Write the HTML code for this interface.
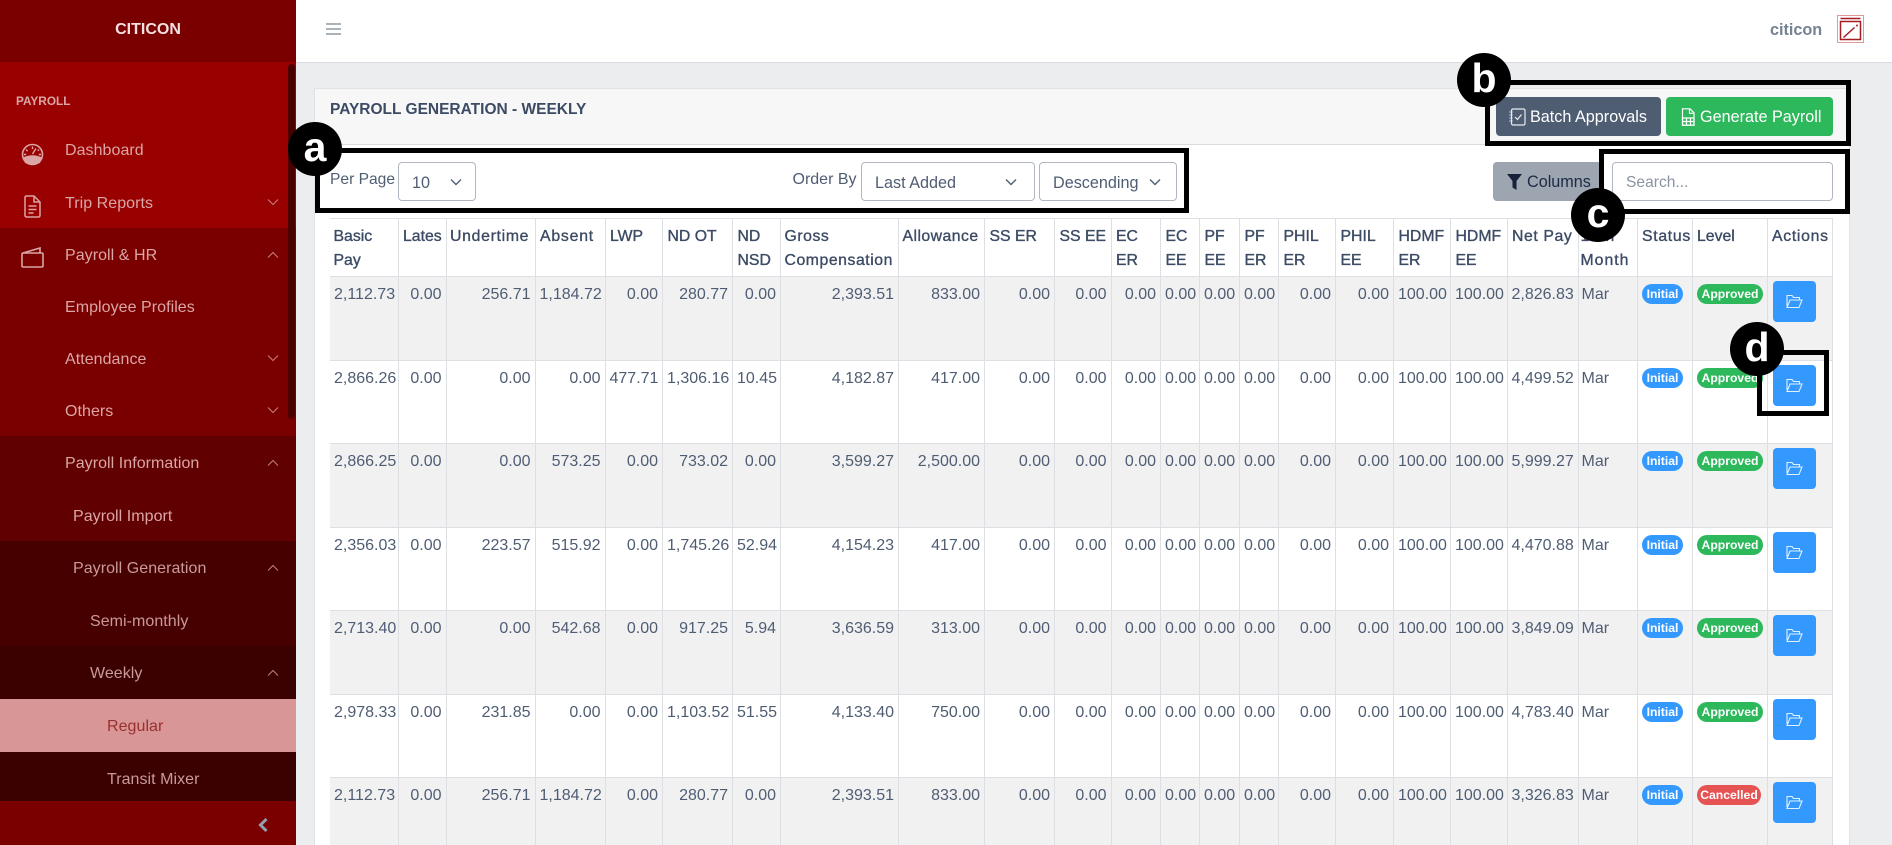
<!DOCTYPE html>
<html lang="en">
<head>
<meta charset="utf-8">
<title>Payroll Generation - Weekly</title>
<style>
*{box-sizing:border-box}
html,body{margin:0;padding:0;width:1892px;height:845px;overflow:hidden;background:#ebedef;font-family:"Liberation Sans",sans-serif;color:#4f5d73}
#page{position:relative;width:1892px;height:845px;overflow:hidden;background:#ebedef}
.abs{position:absolute}
#side{position:absolute;left:0;top:0;width:296px;height:845px;background:#7a0000;overflow:hidden}
.band{position:absolute;left:0;width:296px}
.nav{position:absolute;font-size:16px;line-height:20px;margin-top:1px;color:#dba6a6;white-space:nowrap;letter-spacing:.05px}
.dark{color:#c89a9a}
.chev{position:absolute;left:267px;width:12px;height:8px}
#top{position:absolute;left:296px;top:0;width:1596px;height:63px;background:#fff;border-bottom:1px solid #d8dbe0}
#card{position:absolute;left:314px;top:88px;width:1536px;height:757px;background:#fff;border:1px solid #dfe2e6;border-bottom:0}
#cardh{position:absolute;left:0;top:0;width:100%;height:56px;background:#f7f7f7;border-bottom:1px solid #d8dbe0}
.lbl{position:absolute;font-size:15.6px;line-height:20px;color:#4f5d73;white-space:nowrap}
.sel{position:absolute;top:162px;height:39px;background:#fff;border:1px solid #b1b7c1;border-radius:4px;font-size:16.2px;line-height:39px;color:#4f5d73;white-space:nowrap}
.sel svg{position:absolute;top:15px}
.btn{position:absolute;height:39px;border-radius:4px;color:#fff;font-size:16.2px;line-height:39px;white-space:nowrap}
.btn span{margin-top:1px}
table{position:absolute;left:330px;top:218px;width:1502px;border-collapse:collapse;table-layout:fixed}
th,td{border:1px solid #dcdfe4;vertical-align:top;padding:5px 4px 0;line-height:24px;overflow:visible}
th:first-child,td:first-child{border-left:0}
th{font-size:15.8px;font-weight:400;-webkit-text-stroke:.35px #3c4b64;color:#3c4b64;text-align:left;height:58px;padding:6px 3px 0 4.5px}
th:first-child{padding-left:3.5px}
td{font-size:16px;text-align:right;position:relative;color:#4f5d73;padding-top:6px;white-space:nowrap}
td.l{text-align:left;padding-left:3px}
tbody tr:nth-child(odd) td{background:#f1f1f2}
.b{position:absolute;left:4.5px;top:7px;height:20px;border-radius:10px;color:#fff;font-size:12.2px;font-weight:700;line-height:20px;text-align:center}
.i{width:41px;background:#39f}
.a{width:66px;background:#2eb85c}
.c{width:64px;background:#e55353}
.f{position:absolute;left:5px;top:4px;width:43px;height:41px;background:#39f;border-radius:4px}
.f svg{position:absolute;left:13px;top:13px}
.box{position:absolute;border:5px solid #000}
.dot{position:absolute;width:54px;height:54px;border-radius:50%;background:#000;color:#fff;font-family:"Liberation Sans",sans-serif;font-weight:700;font-size:41px;line-height:50px;text-align:center}
</style>
</head>
<body>
<div id="page">

<div id="side">
  <div class="band" style="top:62px;height:166px;background:#990000"></div>
  <div class="band" style="top:436px;height:105px;background:#610000"></div>
  <div class="band" style="top:541px;height:105px;background:#470000"></div>
  <div class="band" style="top:646px;height:53px;background:#3b0000"></div>
  <div class="band" style="top:699px;height:53px;background:#d89696"></div>
  <div class="band" style="top:752px;height:49px;background:#3b0000"></div>

  <div class="abs" style="left:0;top:20px;width:296px;text-align:center;font-size:16px;font-weight:700;line-height:20px;color:#f3e0e0">CITICON</div>
  <div class="abs" style="left:16px;top:92px;font-size:11.8px;font-weight:700;line-height:18px;color:#dba6a6">PAYROLL</div>

  <svg class="abs" style="left:21px;top:143px" width="23" height="23" viewBox="0 0 23 23" fill="none" stroke="#dba6a6" stroke-width="1.6"><circle cx="11.5" cy="11.5" r="10"/><path d="M2 14.5 Q11.5 10 21 14.5 L19 20 Q11.5 23.5 4 20Z" fill="#dba6a6" stroke="none"/><path d="M11.5 11 L15 5.5M11.5 3.5V6M5 6.5l1.6 1.6M18 6.5l-1.2 1.2M3 11.5h2.2M20 11.5h-2.2" stroke-width="1.4"/></svg>
  <svg class="abs" style="left:24px;top:195px" width="17" height="23" viewBox="0 0 17 23" fill="none" stroke="#dba6a6" stroke-width="1.5"><path d="M2.5 1h7.5l6 6v13.5a1.5 1.5 0 0 1-1.5 1.5h-12A1.5 1.5 0 0 1 1 20.5V2.5A1.5 1.5 0 0 1 2.5 1Z"/><path d="M10 1v6h6M4.5 11h8M4.5 14.5h8M4.5 18h5"/></svg>
  <svg class="abs" style="left:21px;top:247px" width="23" height="21" viewBox="0 0 23 21" fill="none" stroke="#dba6a6" stroke-width="1.6"><rect x="1" y="6" width="21" height="14" rx="1.2"/><path d="M2 6 L19 1 V6"/></svg>

  <div class="nav" style="left:65px;top:140px">Dashboard</div>
  <div class="nav" style="left:65px;top:193px">Trip Reports</div>
  <div class="nav" style="left:65px;top:245px">Payroll &amp; HR</div>
  <div class="nav" style="left:65px;top:297px">Employee Profiles</div>
  <div class="nav" style="left:65px;top:349px">Attendance</div>
  <div class="nav" style="left:65px;top:401px">Others</div>
  <div class="nav" style="left:65px;top:453px">Payroll Information</div>
  <div class="nav" style="left:73px;top:506px">Payroll Import</div>
  <div class="nav dark" style="left:73px;top:558px">Payroll Generation</div>
  <div class="nav dark" style="left:90px;top:611px">Semi-monthly</div>
  <div class="nav dark" style="left:90px;top:663px">Weekly</div>
  <div class="nav" style="left:107px;top:716px;color:#9c2f2f">Regular</div>
  <div class="nav dark" style="left:107px;top:769px">Transit Mixer</div>

  <svg class="chev" style="top:198px" viewBox="0 0 12 8" fill="none" stroke="#c98080" stroke-width="1"><path d="M1 1.5l5 5 5-5"/></svg>
  <svg class="chev" style="top:251px" viewBox="0 0 12 8" fill="none" stroke="#c98080" stroke-width="1"><path d="M1 6.5l5-5 5 5"/></svg>
  <svg class="chev" style="top:354px" viewBox="0 0 12 8" fill="none" stroke="#c98080" stroke-width="1"><path d="M1 1.5l5 5 5-5"/></svg>
  <svg class="chev" style="top:406px" viewBox="0 0 12 8" fill="none" stroke="#c98080" stroke-width="1"><path d="M1 1.5l5 5 5-5"/></svg>
  <svg class="chev" style="top:459px" viewBox="0 0 12 8" fill="none" stroke="#b98080" stroke-width="1"><path d="M1 6.5l5-5 5 5"/></svg>
  <svg class="chev" style="top:564px" viewBox="0 0 12 8" fill="none" stroke="#b98080" stroke-width="1"><path d="M1 6.5l5-5 5 5"/></svg>
  <svg class="chev" style="top:669px" viewBox="0 0 12 8" fill="none" stroke="#b98080" stroke-width="1"><path d="M1 6.5l5-5 5 5"/></svg>

  <svg class="abs" style="left:257px;top:817px" width="12" height="16" viewBox="0 0 12 16" fill="none" stroke="#8fa3b3" stroke-width="3"><path d="M9.5 2L3.5 8l6 6"/></svg>
  <div class="abs" style="left:288px;top:64px;width:7px;height:355px;border-radius:4px;background:#4b0000"></div>
</div>

<div id="top">
  <svg class="abs" style="left:30px;top:22px" width="15" height="14" viewBox="0 0 15 14" stroke="#7b8491" stroke-width="1.2"><path d="M0 2h15M0 7h15M0 12h15"/></svg>
  <div class="abs" style="left:1474px;top:20px;font-size:16.2px;font-weight:700;line-height:20px;color:#768192">citicon</div>
  <svg class="abs" style="left:1541px;top:15px" width="27" height="28" viewBox="0 0 27 28" fill="none"><rect x=".5" y=".5" width="26" height="27" fill="#fff" stroke="#dd9a9a"/><path d="M3.5 3.5h20M3.5 6.500h20v18h-20zM6.500 22.500l11-10" stroke="#a51c24" stroke-width="1.500"/><circle cx="20" cy="10.500" r="1" fill="#a51c24"/></svg>
</div>

<div id="card"><div id="cardh"></div></div>
<div class="abs" style="left:330px;top:100px;font-size:15.5px;font-weight:700;line-height:20px;color:#3c4b64;white-space:nowrap">PAYROLL GENERATION - WEEKLY</div>

<div class="btn" style="left:1496px;top:97px;width:165px;background:#4f5d73">
  <svg class="abs" style="left:13px;top:11px" width="17" height="18" viewBox="0 0 17 18" fill="none" stroke="#e8ebef" stroke-width="1.200"><rect x="2.500" y="1" width="13.500" height="16" rx="1.500"/><path d="M6 9l2.500 2.500L12.500 6.500"/><path d="M.5 4h3M.5 7h3M.5 10h3M.5 13h3" stroke-dasharray="1 1"/></svg>
  <span class="abs" style="left:34px;top:0">Batch Approvals</span>
</div>
<div class="btn" style="left:1666px;top:97px;width:167px;background:#2eb85c">
  <svg class="abs" style="left:15px;top:11px" width="14" height="18" viewBox="0 0 14 18" fill="none" stroke="#fff" stroke-width="1.200"><path d="M1.500.8h7.500l4 4v12.400h-11.500z"/><path d="M8.500.8v4.500h4.500"/><path d="M1.500 10h11.500v7.200H1.500zM1.500 13.500h11.500M5.500 10v7.200M9.500 10v7.200"/></svg>
  <span class="abs" style="left:34px;top:0">Generate Payroll</span>
</div>

<div class="lbl" style="left:330px;top:170px">Per Page</div>
<div class="sel" style="left:398px;width:78px"><span class="abs" style="left:13px;top:1px">10</span><svg style="left:51px" width="12" height="8" viewBox="0 0 12 8" fill="none" stroke="#4f5d73" stroke-width="1.400"><path d="M1 1.500l5 5 5-5"/></svg></div>
<div class="lbl" style="left:792.500px;top:170px;font-size:16px">Order By</div>
<div class="sel" style="left:861px;width:174px"><span class="abs" style="left:13px;top:1px">Last Added</span><svg style="left:143px" width="12" height="8" viewBox="0 0 12 8" fill="none" stroke="#4f5d73" stroke-width="1.400"><path d="M1 1.500l5 5 5-5"/></svg></div>
<div class="sel" style="left:1039px;width:138px"><span class="abs" style="left:13px;top:1px">Descending</span><svg style="left:109px" width="12" height="8" viewBox="0 0 12 8" fill="none" stroke="#4f5d73" stroke-width="1.400"><path d="M1 1.500l5 5 5-5"/></svg></div>

<div class="btn" style="left:1493px;top:162px;width:110px;background:#9da5b1;color:#1c2a44;font-size:16.200px">
  <svg class="abs" style="left:14px;top:12px" width="15" height="16" viewBox="0 0 15 16" fill="#16213a"><path d="M0 0h15L9.500 7v9l-4-2.500V7z"/></svg>
  <span class="abs" style="left:34px;top:0">Columns</span>
</div>
<div class="sel" style="left:1612px;width:221px;color:#8a93a2;font-size:15.600px"><span class="abs" style="left:13px;top:0">Search...</span></div>

<table>
<colgroup>
<col style="width:68px"><col style="width:48px"><col style="width:89px"><col style="width:70px"><col style="width:57.5px"><col style="width:70px"><col style="width:48px"><col style="width:118px"><col style="width:86px"><col style="width:70px"><col style="width:56.5px"><col style="width:49.5px"><col style="width:39px"><col style="width:40px"><col style="width:39px"><col style="width:57px"><col style="width:58px"><col style="width:57px"><col style="width:56.5px"><col style="width:71px"><col style="width:59px"><col style="width:55px"><col style="width:75px"><col style="width:65px">
</colgroup>
<thead>
<tr><th>Basic Pay</th><th>Lates</th><th style="letter-spacing:.7px;padding-left:3.5px">Undertime</th><th style="letter-spacing:.8px">Absent</th><th>LWP</th><th>ND OT</th><th>ND NSD</th><th style="letter-spacing:.55px;padding-left:3.5px">Gross Compensation</th><th style="letter-spacing:.45px;padding-left:3.5px">Allowance</th><th>SS ER</th><th>SS EE</th><th>EC ER</th><th>EC EE</th><th>PF EE</th><th>PF ER</th><th>PHIL ER</th><th>PHIL EE</th><th>HDMF ER</th><th>HDMF EE</th><th style="letter-spacing:.6px">Net Pay</th><th style="letter-spacing:1px;padding-left:2px">13th Month</th><th style="letter-spacing:.7px">Status</th><th>Level</th><th style="letter-spacing:.7px">Actions</th></tr>
</thead>
<tbody>
<tr style="height:84px"><td>2,112.73</td><td>0.00</td><td>256.71</td><td>1,184.72</td><td>0.00</td><td>280.77</td><td>0.00</td><td>2,393.51</td><td>833.00</td><td>0.00</td><td>0.00</td><td>0.00</td><td>0.00</td><td>0.00</td><td>0.00</td><td>0.00</td><td>0.00</td><td>100.00</td><td>100.00</td><td>2,826.83</td><td class="l">Mar</td><td class="l"><span class="b i">Initial</span></td><td class="l"><span class="b a">Approved</span></td><td class="l"><span class="f"><svg width="17" height="15" viewBox="0 0 17 15" fill="none" stroke="#e3f0ff" stroke-width="1.100"><path d="M1 12V1.500h5l1.500 2h6v2.500M1 13.500l3-7.500h12l-3 7.500z"/></svg></span></td></tr>
<tr style="height:83px"><td>2,866.26</td><td>0.00</td><td>0.00</td><td>0.00</td><td>477.71</td><td>1,306.16</td><td>10.45</td><td>4,182.87</td><td>417.00</td><td>0.00</td><td>0.00</td><td>0.00</td><td>0.00</td><td>0.00</td><td>0.00</td><td>0.00</td><td>0.00</td><td>100.00</td><td>100.00</td><td>4,499.52</td><td class="l">Mar</td><td class="l"><span class="b i">Initial</span></td><td class="l"><span class="b a">Approved</span></td><td class="l"><span class="f"><svg width="17" height="15" viewBox="0 0 17 15" fill="none" stroke="#e3f0ff" stroke-width="1.100"><path d="M1 12V1.500h5l1.500 2h6v2.500M1 13.500l3-7.500h12l-3 7.500z"/></svg></span></td></tr>
<tr style="height:84px"><td>2,866.25</td><td>0.00</td><td>0.00</td><td>573.25</td><td>0.00</td><td>733.02</td><td>0.00</td><td>3,599.27</td><td>2,500.00</td><td>0.00</td><td>0.00</td><td>0.00</td><td>0.00</td><td>0.00</td><td>0.00</td><td>0.00</td><td>0.00</td><td>100.00</td><td>100.00</td><td>5,999.27</td><td class="l">Mar</td><td class="l"><span class="b i">Initial</span></td><td class="l"><span class="b a">Approved</span></td><td class="l"><span class="f"><svg width="17" height="15" viewBox="0 0 17 15" fill="none" stroke="#e3f0ff" stroke-width="1.100"><path d="M1 12V1.500h5l1.500 2h6v2.500M1 13.500l3-7.500h12l-3 7.500z"/></svg></span></td></tr>
<tr style="height:83px"><td>2,356.03</td><td>0.00</td><td>223.57</td><td>515.92</td><td>0.00</td><td>1,745.26</td><td>52.94</td><td>4,154.23</td><td>417.00</td><td>0.00</td><td>0.00</td><td>0.00</td><td>0.00</td><td>0.00</td><td>0.00</td><td>0.00</td><td>0.00</td><td>100.00</td><td>100.00</td><td>4,470.88</td><td class="l">Mar</td><td class="l"><span class="b i">Initial</span></td><td class="l"><span class="b a">Approved</span></td><td class="l"><span class="f"><svg width="17" height="15" viewBox="0 0 17 15" fill="none" stroke="#e3f0ff" stroke-width="1.100"><path d="M1 12V1.500h5l1.500 2h6v2.500M1 13.500l3-7.500h12l-3 7.500z"/></svg></span></td></tr>
<tr style="height:84px"><td>2,713.40</td><td>0.00</td><td>0.00</td><td>542.68</td><td>0.00</td><td>917.25</td><td>5.94</td><td>3,636.59</td><td>313.00</td><td>0.00</td><td>0.00</td><td>0.00</td><td>0.00</td><td>0.00</td><td>0.00</td><td>0.00</td><td>0.00</td><td>100.00</td><td>100.00</td><td>3,849.09</td><td class="l">Mar</td><td class="l"><span class="b i">Initial</span></td><td class="l"><span class="b a">Approved</span></td><td class="l"><span class="f"><svg width="17" height="15" viewBox="0 0 17 15" fill="none" stroke="#e3f0ff" stroke-width="1.100"><path d="M1 12V1.500h5l1.500 2h6v2.500M1 13.500l3-7.500h12l-3 7.500z"/></svg></span></td></tr>
<tr style="height:83px"><td>2,978.33</td><td>0.00</td><td>231.85</td><td>0.00</td><td>0.00</td><td>1,103.52</td><td>51.55</td><td>4,133.40</td><td>750.00</td><td>0.00</td><td>0.00</td><td>0.00</td><td>0.00</td><td>0.00</td><td>0.00</td><td>0.00</td><td>0.00</td><td>100.00</td><td>100.00</td><td>4,783.40</td><td class="l">Mar</td><td class="l"><span class="b i">Initial</span></td><td class="l"><span class="b a">Approved</span></td><td class="l"><span class="f"><svg width="17" height="15" viewBox="0 0 17 15" fill="none" stroke="#e3f0ff" stroke-width="1.100"><path d="M1 12V1.500h5l1.500 2h6v2.500M1 13.500l3-7.500h12l-3 7.500z"/></svg></span></td></tr>
<tr style="height:84px"><td>2,112.73</td><td>0.00</td><td>256.71</td><td>1,184.72</td><td>0.00</td><td>280.77</td><td>0.00</td><td>2,393.51</td><td>833.00</td><td>0.00</td><td>0.00</td><td>0.00</td><td>0.00</td><td>0.00</td><td>0.00</td><td>0.00</td><td>0.00</td><td>100.00</td><td>100.00</td><td>3,326.83</td><td class="l">Mar</td><td class="l"><span class="b i">Initial</span></td><td class="l"><span class="b c">Cancelled</span></td><td class="l"><span class="f"><svg width="17" height="15" viewBox="0 0 17 15" fill="none" stroke="#e3f0ff" stroke-width="1.100"><path d="M1 12V1.500h5l1.500 2h6v2.500M1 13.500l3-7.500h12l-3 7.500z"/></svg></span></td></tr>
</tbody>
</table>

<div class="box" style="left:315px;top:148px;width:874px;height:65px"></div>
<div class="box" style="left:1485px;top:80px;width:366px;height:66px"></div>
<div class="box" style="left:1599px;top:149px;width:251px;height:65px"></div>
<div class="box" style="left:1757px;top:350px;width:72px;height:66px"></div>
<div class="dot" style="left:288px;top:122px">a</div>
<div class="dot" style="left:1457px;top:53px">b</div>
<div class="dot" style="left:1571px;top:188px">c</div>
<div class="dot" style="left:1730px;top:322px">d</div>

</div>
</body>
</html>
